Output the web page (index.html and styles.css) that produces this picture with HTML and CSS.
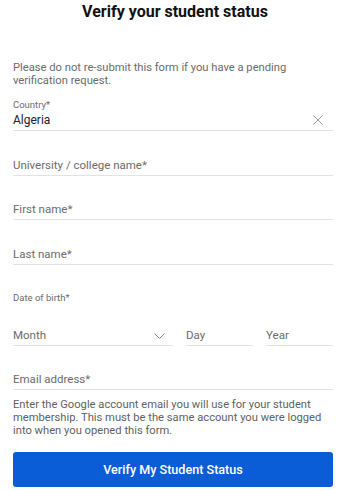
FILE: index.html
```html
<!DOCTYPE html>
<html lang="en">
<head>
<meta charset="utf-8">
<title>Verify your student status</title>
<link rel="stylesheet" href="styles.css">
</head>
<body>
<main class="page">
  <h1 class="title">Verify your student status</h1>
  <p class="notice">Please do not re-submit this form if you have a pending verification request.</p>
  <form class="form">
    <div class="label label-country">Country*</div>
    <div class="field field-country">
      <span class="value">Algeria</span>
      <svg class="clear" width="10" height="10" viewBox="0 0 10 10"><path d="M0.5 0.5L9.5 9.5M9.5 0.5L0.5 9.5" stroke="#9a9a9a" stroke-width="1" fill="none"/></svg>
    </div>
    <div class="field field-gap"><span class="placeholder">University / college name*</span></div>
    <div class="field field-gap"><span class="placeholder">First name*</span></div>
    <div class="field field-gap"><span class="placeholder">Last name*</span></div>
    <div class="label label-dob">Date of birth*</div>
    <div class="date-row">
      <div class="field month"><span class="placeholder">Month</span>
        <svg class="chevron" width="11" height="6" viewBox="0 0 11 6"><path d="M0.5 0.6L5.5 5.4L10.5 0.6" stroke="#8a8a8a" stroke-width="1" fill="none"/></svg>
      </div>
      <div class="field day"><span class="placeholder">Day</span></div>
      <div class="field year"><span class="placeholder">Year</span></div>
    </div>
    <div class="field field-gap"><span class="placeholder">Email address*</span></div>
    <p class="helper">Enter the Google account email you will use for your student membership. This must be the same account you were logged into when you opened this form.</p>
    <button type="button" class="submit">Verify My Student Status</button>
  </form>
</main>
</body>
</html>
```

FILE: styles.css
```css
html, body {
  margin: 0;
  padding: 0;
  background: #ffffff;
}
body {
  font-family: Roboto, "Liberation Sans", Arial, sans-serif;
  color: #202124;
}
.page {
  padding: 0 17px 0 13px;
  display: flex;
  flex-direction: column;
}
.title {
  margin: 0;
  height: 24px;
  line-height: 24px;
  font-size: 16px;
  font-weight: 700;
  text-align: center;
  color: #111;
  padding-left: 4px;
}
.notice {
  margin: 38px 0 0;
  font-size: 11.2px;
  line-height: 12.5px;
  color: #6b6b6b;
}
.form {
  display: flex;
  flex-direction: column;
}
.label {
  font-size: 9.5px;
  line-height: 11px;
  color: #6b6b6b;
}
.label-country {
  margin-top: 12px;
}
.label-dob {
  margin-top: 27px;
}
.field {
  height: 20px;
  border-bottom: 1px solid #e2e2e2;
  display: flex;
  align-items: center;
  font-size: 11.5px;
}
.field-gap {
  margin-top: 23.5px;
}
.value {
  flex: 1;
  color: #202124;
  font-size: 12px;
}
.placeholder {
  flex: 1;
  color: #6b6b6b;
}
.clear {
  margin-right: 10px;
}
.date-row {
  margin-top: 22px;
  display: flex;
  gap: 13px;
}
.month {
  width: 160px;
}
.chevron {
  margin-right: 8px;
  margin-top: 2px;
}
.day, .year {
  flex: 1;
}
.helper {
  margin: 8px 0 0;
  font-size: 11.2px;
  line-height: 13px;
  color: #5f5f5f;
}
.submit {
  margin-top: 15px;
  height: 35px;
  border: none;
  border-radius: 3px;
  background: #0b5cd7;
  color: #fff;
  font-family: inherit;
  font-size: 12.6px;
  font-weight: 500;
  padding: 0;
}
```
